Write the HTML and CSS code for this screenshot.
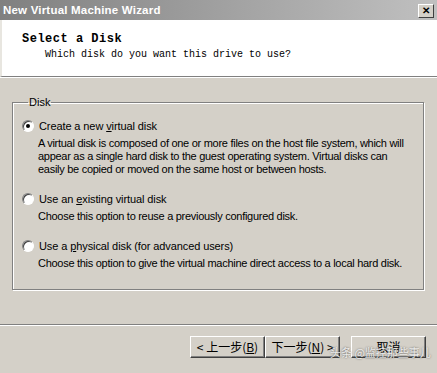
FILE: index.html
```html
<!DOCTYPE html>
<html lang="en">
<head>
    <meta charset="UTF-8">
    <title>New Virtual Machine Wizard</title>
    <link rel="stylesheet" href="styles.css">
</head>
<body>

<div class="window">
    <div class="titlebar">
        <span class="title">New Virtual Machine Wizard</span>
        <span class="close">&#x2715;</span>
    </div>

    <div class="header">
        <div class="header-title">Select a Disk</div>
        <div class="header-sub">Which disk do you want this drive to use?</div>
    </div>

    <div class="content">
        <fieldset class="group">
            <legend>Disk</legend>

            <div class="option">
                <span class="radio checked"></span>
                <span class="label">Create a new <u>v</u>irtual disk</span>
            </div>
            <p class="desc">A virtual disk is composed of one or more files on the host file system, which will<br>
                appear as a single hard disk to the guest operating system. Virtual disks can<br>
                easily be copied or moved on the same host or between hosts.</p>

            <div class="option">
                <span class="radio"></span>
                <span class="label">Use an <u>e</u>xisting virtual disk</span>
            </div>
            <p class="desc">Choose this option to reuse a previously configured disk.</p>

            <div class="option">
                <span class="radio"></span>
                <span class="label">Use a <u>p</u>hysical disk (for advanced users)</span>
            </div>
            <p class="desc">Choose this option to give the virtual machine direct access to a local hard disk.</p>
        </fieldset>
    </div>

    <div class="footer">
        <button class="btn">&lt; 上一步(<u>B</u>)</button>
        <button class="btn">下一步(<u>N</u>) &gt;</button>
        <button class="btn cancel">取消</button>
    </div>

    <div class="watermark">头条 @监控那些事儿</div>
</div>

</body>
</html>
```

FILE: styles.css
```css
body { margin: 0; background: #d4d0c8; font-family: "Liberation Sans", Arial, sans-serif; font-size: 11px; color: #000; }
.window { position: relative; width: 437px; height: 373px; overflow: hidden; background: #d4d0c8; }

.titlebar { height: 20px; display: flex; align-items: center; justify-content: space-between; padding: 0 3px 0 3px; background: linear-gradient(to right, #808080, #c0c0c0); }
.title { color: #fff; font-weight: bold; font-size: 11.5px; letter-spacing: 0.2px; }
.close { width: 14px; height: 12px; margin-top: 1px; background: #d4d0c8; border: 1px solid; border-color: #fff #404040 #404040 #fff; font-size: 10px; font-weight: bold; line-height: 12px; text-align: center; }

.header { height: 57px; background: #fff; border-left: 2px solid #e8e6e0; border-bottom: 1px solid #808080; padding: 12px 0 0 20px; box-sizing: border-box; font-family: "Liberation Mono", "Noto Sans CJK SC", monospace; }
.header-title { font-weight: bold; font-size: 12px; line-height: 14px; letter-spacing: 0.5px; }
.header-sub { font-size: 10px; line-height: 14px; margin: 2px 0 0 23px; }

.content { border-top: 1px solid #fff; padding: 18px 13px 0 12px; height: 247px; box-sizing: border-box; }
.group { margin: 0; height: 194px; box-sizing: border-box; padding: 9px 10px 0 9px; border: 1px solid #808080; box-shadow: inset 1px 1px #fff, 1px 1px #fff; }
.group legend { padding: 0 1px; margin-left: 6px; font-size: 11px; }

.option { display: flex; align-items: center; height: 16px; margin-top: 1px; white-space: nowrap; }
.radio { width: 10px; height: 10px; border-radius: 50%; background: #fff; border: 1px solid; border-color: #808080 #fff #fff #808080; box-shadow: inset 1px 1px #404040; margin-right: 5px; position: relative; }
.radio.checked::after { content: ""; position: absolute; left: 3px; top: 3px; width: 4px; height: 4px; border-radius: 50%; background: #000; }
.label { line-height: 16px; letter-spacing: -0.1px; }
.desc { margin: 3px 0 15px 16px; line-height: 13px; white-space: nowrap; letter-spacing: -0.28px; }

.footer { border-top: 1px solid #808080; box-shadow: 0 1px #fff inset; padding: 11px 11px 0 0; display: flex; justify-content: flex-end; }
.btn { width: 75px; height: 22px; padding: 0; background: #d4d0c8; border: 1px solid; border-color: #fff #404040 #404040 #fff; box-shadow: inset -1px -1px #808080; font-family: "Noto Sans CJK SC", sans-serif; font-size: 12px; line-height: 18px; color: #000; }
.btn.cancel { margin-left: 11px; }

.watermark { position: absolute; left: 330px; top: 346px; color: rgba(255,255,255,0.85); font-family: "Noto Sans CJK SC", sans-serif; font-size: 11px; line-height: 13px; text-shadow: 0 0 2px rgba(0,0,0,0.6); }
```
